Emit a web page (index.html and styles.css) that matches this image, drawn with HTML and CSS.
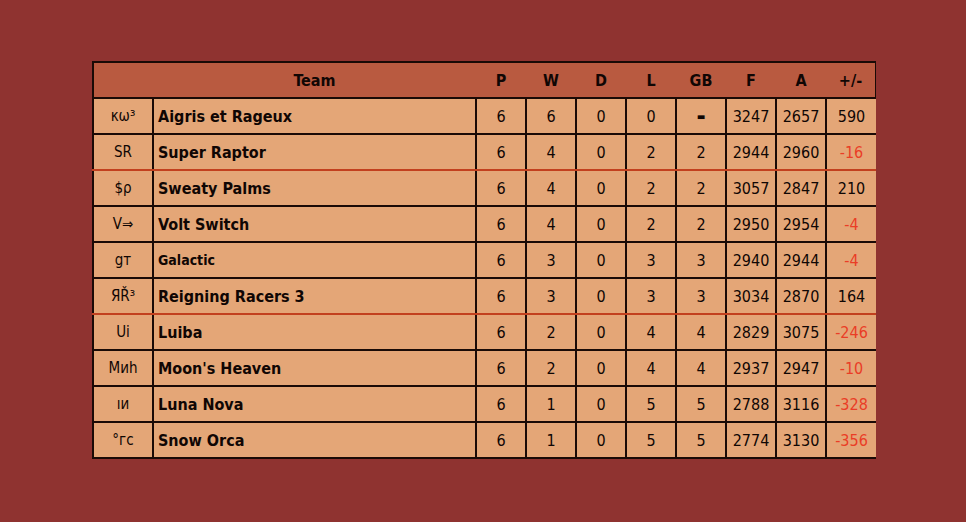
FILE: index.html
```html
<!DOCTYPE html>
<html>
<head>
<meta charset="utf-8">
<link rel="stylesheet" href="styles.css">
</head>
<body>
<div class="page">
  <div class="frame">
    <table class="standings">
      <colgroup>
        <col class="c-abbr"><col class="c-team">
        <col class="c-num"><col class="c-num"><col class="c-num"><col class="c-num"><col class="c-num">
        <col class="c-num"><col class="c-num"><col class="c-num">
      </colgroup>
      <thead>
        <tr>
          <th class="h-first"></th>
          <th>Team</th>
          <th>P</th><th>W</th><th>D</th><th>L</th><th>GB</th><th>F</th><th>A</th><th class="h-last">+/-</th>
        </tr>
      </thead>
      <tbody>
        <tr><td class="abbr">κω³</td><td class="team">Aigris et Rageux</td><td>6</td><td>6</td><td>0</td><td>0</td><td class="dash">&#x25AC;</td><td>3247</td><td>2657</td><td class="diff">590</td></tr>
        <tr class="cut"><td class="abbr">SR</td><td class="team">Super Raptor</td><td>6</td><td>4</td><td>0</td><td>2</td><td>2</td><td>2944</td><td>2960</td><td class="diff neg">-16</td></tr>
        <tr><td class="abbr">$ρ</td><td class="team">Sweaty Palms</td><td>6</td><td>4</td><td>0</td><td>2</td><td>2</td><td>3057</td><td>2847</td><td class="diff">210</td></tr>
        <tr><td class="abbr">V⇒</td><td class="team">Volt Switch</td><td>6</td><td>4</td><td>0</td><td>2</td><td>2</td><td>2950</td><td>2954</td><td class="diff neg">-4</td></tr>
        <tr><td class="abbr">gт</td><td class="team small">Galactic</td><td>6</td><td>3</td><td>0</td><td>3</td><td>3</td><td>2940</td><td>2944</td><td class="diff neg">-4</td></tr>
        <tr class="cut"><td class="abbr">ЯŘ³</td><td class="team">Reigning Racers 3</td><td>6</td><td>3</td><td>0</td><td>3</td><td>3</td><td>3034</td><td>2870</td><td class="diff">164</td></tr>
        <tr><td class="abbr">Ui</td><td class="team">Luiba</td><td>6</td><td>2</td><td>0</td><td>4</td><td>4</td><td>2829</td><td>3075</td><td class="diff neg">-246</td></tr>
        <tr><td class="abbr">Миh</td><td class="team">Moon's Heaven</td><td>6</td><td>2</td><td>0</td><td>4</td><td>4</td><td>2937</td><td>2947</td><td class="diff neg">-10</td></tr>
        <tr><td class="abbr">ıи</td><td class="team">Luna Nova</td><td>6</td><td>1</td><td>0</td><td>5</td><td>5</td><td>2788</td><td>3116</td><td class="diff neg">-328</td></tr>
        <tr><td class="abbr">°гс</td><td class="team">Snow Orca</td><td>6</td><td>1</td><td>0</td><td>5</td><td>5</td><td>2774</td><td>3130</td><td class="diff neg">-356</td></tr>
      </tbody>
    </table>
  </div>
</div>
</body>
</html>
```
FILE: styles.css
```css
html, body {
  margin: 0;
  padding: 0;
  background: #8f3330;
}
.page {
  width: 966px;
  height: 522px;
  padding: 61px 0 0 92px;
  box-sizing: border-box;
  font-family: "DejaVu Sans Condensed", "DejaVu Sans", sans-serif;
  font-stretch: semi-condensed;
  color: #100604;
}
.frame {
  width: 784px;
  overflow: hidden;
}
.standings {
  border-collapse: collapse;
  table-layout: fixed;
  width: 784px;
}
.c-abbr { width: 60px; }
.c-team { width: 323px; }
.c-num { width: 50px; }
.standings th {
  background: #b95a40;
  height: 34px;
  padding: 0;
  font-size: 16px;
  font-weight: bold;
  text-align: center;
  border-top: 2px solid #1a0a06;
  border-bottom: 2px solid #1a0a06;
}
.standings th.h-first { border-left: 2px solid #1a0a06; }
.standings th.h-last { border-right: 2px solid #1a0a06; }
.standings td {
  background: #e4a677;
  height: 34px;
  padding: 0;
  font-size: 16px;
  text-align: center;
  border: 2px solid #1a0a06;
}
.standings td.diff { border-right: none; }
.standings td.abbr { font-size: 15px; }
.standings td.team {
  text-align: left;
  padding-left: 4px;
  font-weight: bold;
  font-size: 16px;
}
.standings td.team.small { font-size: 14px; }
.standings td.dash { font-size: 10px; font-weight: bold; }
.standings td.neg { color: #ea3d26; }
.standings tr.cut td { border-bottom: 2px solid #c2401e; }
```
